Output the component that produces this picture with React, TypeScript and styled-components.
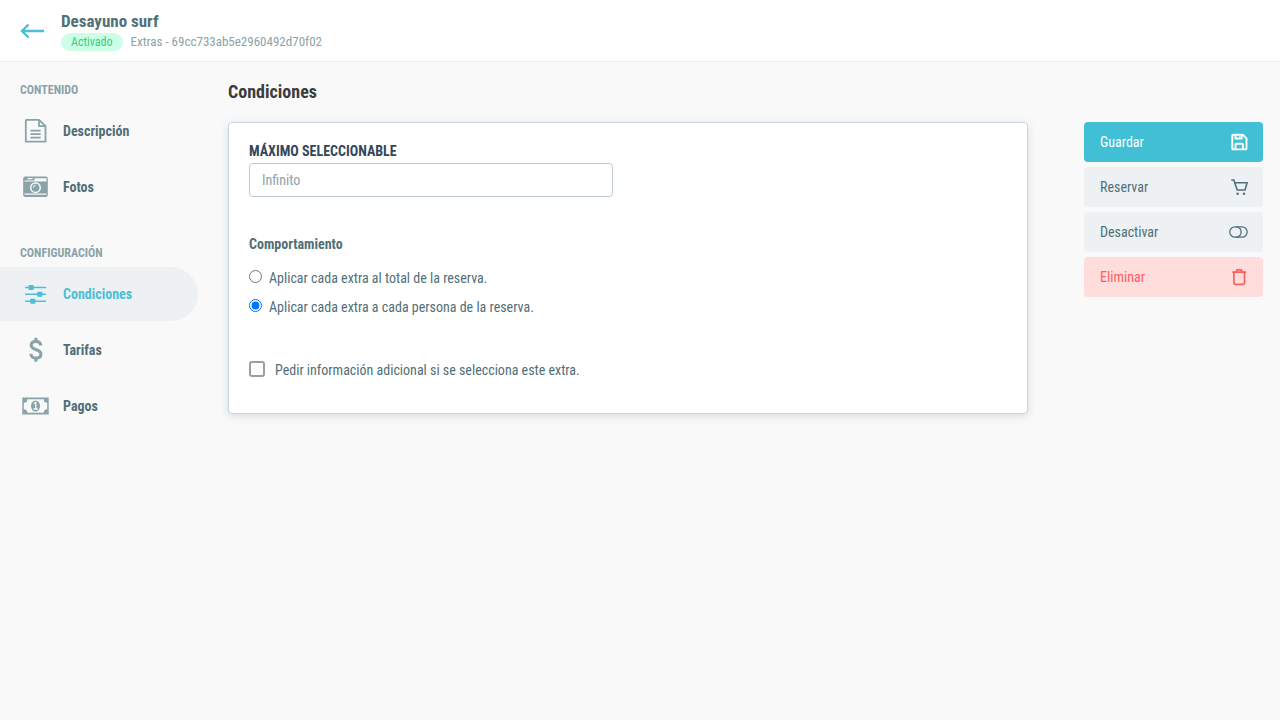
import React from "react";
import styled, { createGlobalStyle, css } from "styled-components";

const GlobalStyle = createGlobalStyle`
  *, *::before, *::after { box-sizing: border-box; }
  body {
    margin: 0;
    background: #f9f9f9;
    color: #516f77;
    font-family: "Roboto Condensed", "Liberation Sans Narrow", Roboto, sans-serif;
    font-size: 14px;
    line-height: 20px;
  }
  button, input { font: inherit; }
`;

const Header = styled.header`
  display: flex;
  align-items: center;
  gap: 16px;
  height: 62px;
  padding: 0 20px;
  background: #fff;
  border-bottom: 1px solid #eeeeee;
`;

const BackLink = styled.a`
  display: flex;
  color: #4dbfd5;
`;

const HeaderText = styled.div`
  display: flex;
  flex-direction: column;
`;

const Title = styled.h1`
  margin: 0 0 2px;
  font-size: 17px;
  line-height: 20px;
  font-weight: 700;
`;

const Meta = styled.div`
  display: flex;
  align-items: center;
  gap: 8px;
  font-size: 13px;
  line-height: 18px;
  color: #8aa3a8;
`;

const Badge = styled.span`
  padding: 0 10px;
  border-radius: 9px;
  background: #ccffe6;
  color: #2fd180;
  font-size: 12px;
`;

const Layout = styled.div`
  display: flex;
  align-items: flex-start;
`;

const Sidebar = styled.nav`
  flex: 0 0 198px;
  padding-top: 18px;
`;

const NavGroup = styled.section`
  margin-bottom: 29px;
`;

const NavHeading = styled.h2`
  margin: 0 0 4px;
  padding-left: 20px;
  font-size: 12px;
  line-height: 20px;
  font-weight: 700;
  text-transform: uppercase;
  color: #8aa3a8;
`;

const NavList = styled.ul`
  display: flex;
  flex-direction: column;
  gap: 2px;
  margin: 0;
  padding: 0;
  list-style: none;
`;

const NavLink = styled.a<{ $active?: boolean }>`
  display: flex;
  align-items: center;
  gap: 13px;
  height: 54px;
  padding-left: 21px;
  border-radius: 0 27px 27px 0;
  font-weight: 700;
  text-decoration: none;
  color: #516f77;
  svg { color: #8aa3a8; }
  ${(p) =>
    p.$active &&
    css`
      background: #edf1f4;
      color: #4dbfd5;
      svg { color: #4dbfd5; }
    `}
`;

const Main = styled.main`
  flex: 0 1 800px;
  min-width: 0;
  margin-left: 30px;
  padding-top: 18px;
`;

const PageTitle = styled.h2`
  margin: 0 0 18px;
  font-size: 18px;
  line-height: 24px;
  font-weight: 700;
  color: #3c3c3c;
`;

const Card = styled.form`
  padding: 18px 20px 33px;
  background: #fff;
  border: 1px solid #cbd6e2;
  border-radius: 4px;
  box-shadow: 0 2px 8px rgba(81, 111, 119, 0.2);
`;

const FieldLabel = styled.label`
  display: block;
  margin-bottom: 2px;
  font-weight: 700;
  text-transform: uppercase;
  color: #33475b;
`;

const TextInput = styled.input`
  display: block;
  width: 48%;
  height: 34px;
  padding: 0 12px;
  border: 1px solid #c0cad4;
  border-radius: 4px;
  background: #fff;
  color: #516f77;
  &::placeholder { color: #8aa3a8; opacity: 1; }
`;

const Fieldset = styled.fieldset`
  margin: 37px 0 0;
  padding: 0;
  border: 0;
`;

const Legend = styled.legend`
  margin-bottom: 14px;
  padding: 0;
  font-weight: 700;
`;

const Option = styled.label`
  display: flex;
  gap: 7px;
  margin-bottom: 9px;
`;

const Radio = styled.input`
  width: 13px;
  height: 13px;
  margin: 2px 0 0;
`;

const CheckOption = styled.label`
  display: flex;
  gap: 10px;
  margin-top: 34px;
`;

const Checkbox = styled.input`
  appearance: none;
  width: 16px;
  height: 16px;
  margin: 1px 0 0;
  border: 2px solid #9e9e9e;
  border-radius: 3px;
  background: #fff;
  &:checked { background: #4dbfd5; }
`;

const Actions = styled.aside`
  display: flex;
  flex: 0 0 179px;
  flex-direction: column;
  gap: 5px;
  margin: 60px 17px 0 auto;
`;

const tones = {
  primary: { background: "#41bfd4", color: "#ffffff" },
  neutral: { background: "#edf1f4", color: "#516f77" },
  danger: { background: "#ffdddd", color: "#ff5c5c" },
};

const ActionButton = styled.button<{ $tone: keyof typeof tones }>`
  display: flex;
  align-items: center;
  justify-content: space-between;
  height: 40px;
  padding: 0 15px 0 16px;
  border: 0;
  border-radius: 4px;
  cursor: pointer;
  background: ${(p) => tones[p.$tone].background};
  color: ${(p) => tones[p.$tone].color};
`;

const ArrowIcon = () => (
  <svg width="25" height="16" viewBox="0 0 25 16" fill="none" stroke="currentColor" strokeWidth="2.4">
    <path d="M24 8H2M8.500 1.500L2 8l6.500 6.500" />
  </svg>
);

const DocumentIcon = () => (
  <svg width="29" height="28" viewBox="0 0 29 28" fill="none" stroke="currentColor" strokeWidth="1.800">
    <path d="M5.500 2.800h12.500l6.500 6.400v15.500H5.500q-.7 0-.7-.7V3.500q0-.7.7-.7zM18 2.800v6.400h6.500" strokeLinejoin="round" />
    <path d="M9.500 13.700h10.200M9.500 17.200h10.200M9.500 20.700h10.200" />
  </svg>
);

const CameraIcon = () => (
  <svg width="29" height="28" viewBox="0 0 29 28">
    <path
      fill="currentColor"
      fillRule="evenodd"
      d="M4.200 3.500h20.600q2 0 2 2v16.600q0 2-2 2H4.200q-2 0-2-2V5.500q0-2 2-2zM3.500 7.400v1.200h22v-3.300H13.500v2.100zM6.500 5v1.200h5V5zM3.500 20.500v1.300h22v-1.300z"
    />
    <circle cx="14.500" cy="14.700" r="5.500" fill="#f9f9f9" />
    <circle cx="14.500" cy="14.700" r="4" fill="currentColor" />
    <path d="M12.300 14.500a2.300 2.300 0 0 1 2.200-2.200" stroke="#f9f9f9" fill="none" />
  </svg>
);

const SlidersIcon = () => (
  <svg width="29" height="28" viewBox="0 0 29 28" fill="currentColor">
    <path d="M4 6.700h21v1.600H4zM4 13.500h21v1.600H4zM4 20.400h21v1.600H4z" />
    <rect x="7.500" y="5" width="5.200" height="5" rx=".8" />
    <rect x="16.200" y="11.800" width="5.200" height="5" rx=".8" />
    <rect x="9.200" y="18.700" width="5.200" height="5" rx=".8" />
  </svg>
);

const DollarIcon = () => (
  <svg width="29" height="28" viewBox="0 0 29 28" fill="none" stroke="currentColor" strokeWidth="3.100">
    <path d="M19.700 9.600C19.700 6.800 17.700 5.500 15 5.500c-2.900 0-4.800 1.400-4.800 3.700 0 5.400 9.700 3.200 9.700 9 0 2.500-2 3.900-4.900 3.900-3 0-5.100-1.500-5.100-4.400" />
    <path d="M14.900 1.800v3.700M14.900 22v3.800" />
  </svg>
);

const BanknoteIcon = () => (
  <svg width="29" height="28" viewBox="0 0 29 28">
    <path
      fill="currentColor"
      fillRule="evenodd"
      d="M1.300 5.500h26.400v17H1.300zM6.300 7.200q0 3.500-3.500 3.500v6.600q3.500 0 3.500 3.500h16.400q0-3.500 3.500-3.500v-6.600q-3.500 0-3.500-3.500z"
    />
    <ellipse cx="14.500" cy="14" rx="4.500" ry="5.500" fill="currentColor" />
    <path d="M12.800 11.600l2-1.200v6.600M12.500 17h4.300" stroke="#f9f9f9" strokeWidth="1.300" fill="none" />
  </svg>
);

const SaveIcon = () => (
  <svg width="17" height="18" viewBox="0 0 17 18" fill="none" stroke="currentColor" strokeWidth="1.900">
    <path d="M2 1.800h9.800l3.700 3.500v10.400q0 .7-.7.700H2q-.7 0-.7-.7V2.500q0-.7.7-.7z" />
    <path d="M4.500 1.800v3.700h6.300V1.800M4.500 16.400v-5q0-.7.700-.7h6q.7 0 .7.700v5" />
    <path d="M9 2.500v2.200" strokeWidth="1.200" />
  </svg>
);

const CartIcon = () => (
  <svg width="17" height="18" viewBox="0 0 17 18" fill="none" stroke="currentColor" strokeWidth="1.600">
    <path d="M.3 2h2.500l3.400 10h7.800l2.100-7.200H3.700" />
    <circle cx="6.600" cy="15.800" r="1.200" fill="currentColor" stroke="none" />
    <circle cx="13" cy="15.800" r="1.200" fill="currentColor" stroke="none" />
  </svg>
);

const ToggleIcon = () => (
  <svg width="19" height="12" viewBox="0 0 19 12" fill="none" stroke="currentColor" strokeWidth="1.300">
    <rect x=".8" y=".8" width="17.400" height="10.400" rx="5.200" />
    <path d="M7 .8a5.200 5.200 0 0 1 0 10.400" />
  </svg>
);

const TrashIcon = () => (
  <svg width="17" height="18" viewBox="0 0 17 18" fill="none" stroke="currentColor" strokeWidth="1.700">
    <path d="M1.300 4.200h13.800M2.900 4.200v10.600q0 1.500 1.500 1.500h7.600q1.500 0 1.500-1.500V4.200M5.500 4V3.200q0-1.300 1.300-1.300h2.800q1.300 0 1.300 1.300V4" />
  </svg>
);

const navGroups = [
  {
    heading: "Contenido",
    items: [
      { label: "Descripción", Icon: DocumentIcon },
      { label: "Fotos", Icon: CameraIcon },
    ],
  },
  {
    heading: "Configuración",
    items: [
      { label: "Condiciones", Icon: SlidersIcon, active: true },
      { label: "Tarifas", Icon: DollarIcon },
      { label: "Pagos", Icon: BanknoteIcon },
    ],
  },
];

const actions: { label: string; tone: keyof typeof tones; Icon: React.FC }[] = [
  { label: "Guardar", tone: "primary", Icon: SaveIcon },
  { label: "Reservar", tone: "neutral", Icon: CartIcon },
  { label: "Desactivar", tone: "neutral", Icon: ToggleIcon },
  { label: "Eliminar", tone: "danger", Icon: TrashIcon },
];

export default function App() {
  return (
    <>
      <GlobalStyle />
      <Header>
        <BackLink href="#" aria-label="Volver">
          <ArrowIcon />
        </BackLink>
        <HeaderText>
          <Title>Desayuno surf</Title>
          <Meta>
            <Badge>Activado</Badge>
            <span>Extras - 69cc733ab5e2960492d70f02</span>
          </Meta>
        </HeaderText>
      </Header>
      <Layout>
        <Sidebar>
          {navGroups.map((group) => (
            <NavGroup key={group.heading}>
              <NavHeading>{group.heading}</NavHeading>
              <NavList>
                {group.items.map(({ label, Icon, active }: { label: string; Icon: React.FC; active?: boolean }) => (
                  <li key={label}>
                    <NavLink href="#" $active={active} aria-current={active ? "page" : undefined}>
                      <Icon />
                      {label}
                    </NavLink>
                  </li>
                ))}
              </NavList>
            </NavGroup>
          ))}
        </Sidebar>
        <Main>
          <PageTitle>Condiciones</PageTitle>
          <Card>
            <FieldLabel htmlFor="max">Máximo seleccionable</FieldLabel>
            <TextInput id="max" type="text" placeholder="Infinito" />
            <Fieldset>
              <Legend>Comportamiento</Legend>
              <Option>
                <Radio type="radio" name="mode" value="total" />
                Aplicar cada extra al total de la reserva.
              </Option>
              <Option>
                <Radio type="radio" name="mode" value="person" defaultChecked />
                Aplicar cada extra a cada persona de la reserva.
              </Option>
            </Fieldset>
            <CheckOption>
              <Checkbox type="checkbox" />
              Pedir información adicional si se selecciona este extra.
            </CheckOption>
          </Card>
        </Main>
        <Actions>
          {actions.map(({ label, tone, Icon }) => (
            <ActionButton key={label} type="button" $tone={tone}>
              {label}
              <Icon />
            </ActionButton>
          ))}
        </Actions>
      </Layout>
    </>
  );
}
